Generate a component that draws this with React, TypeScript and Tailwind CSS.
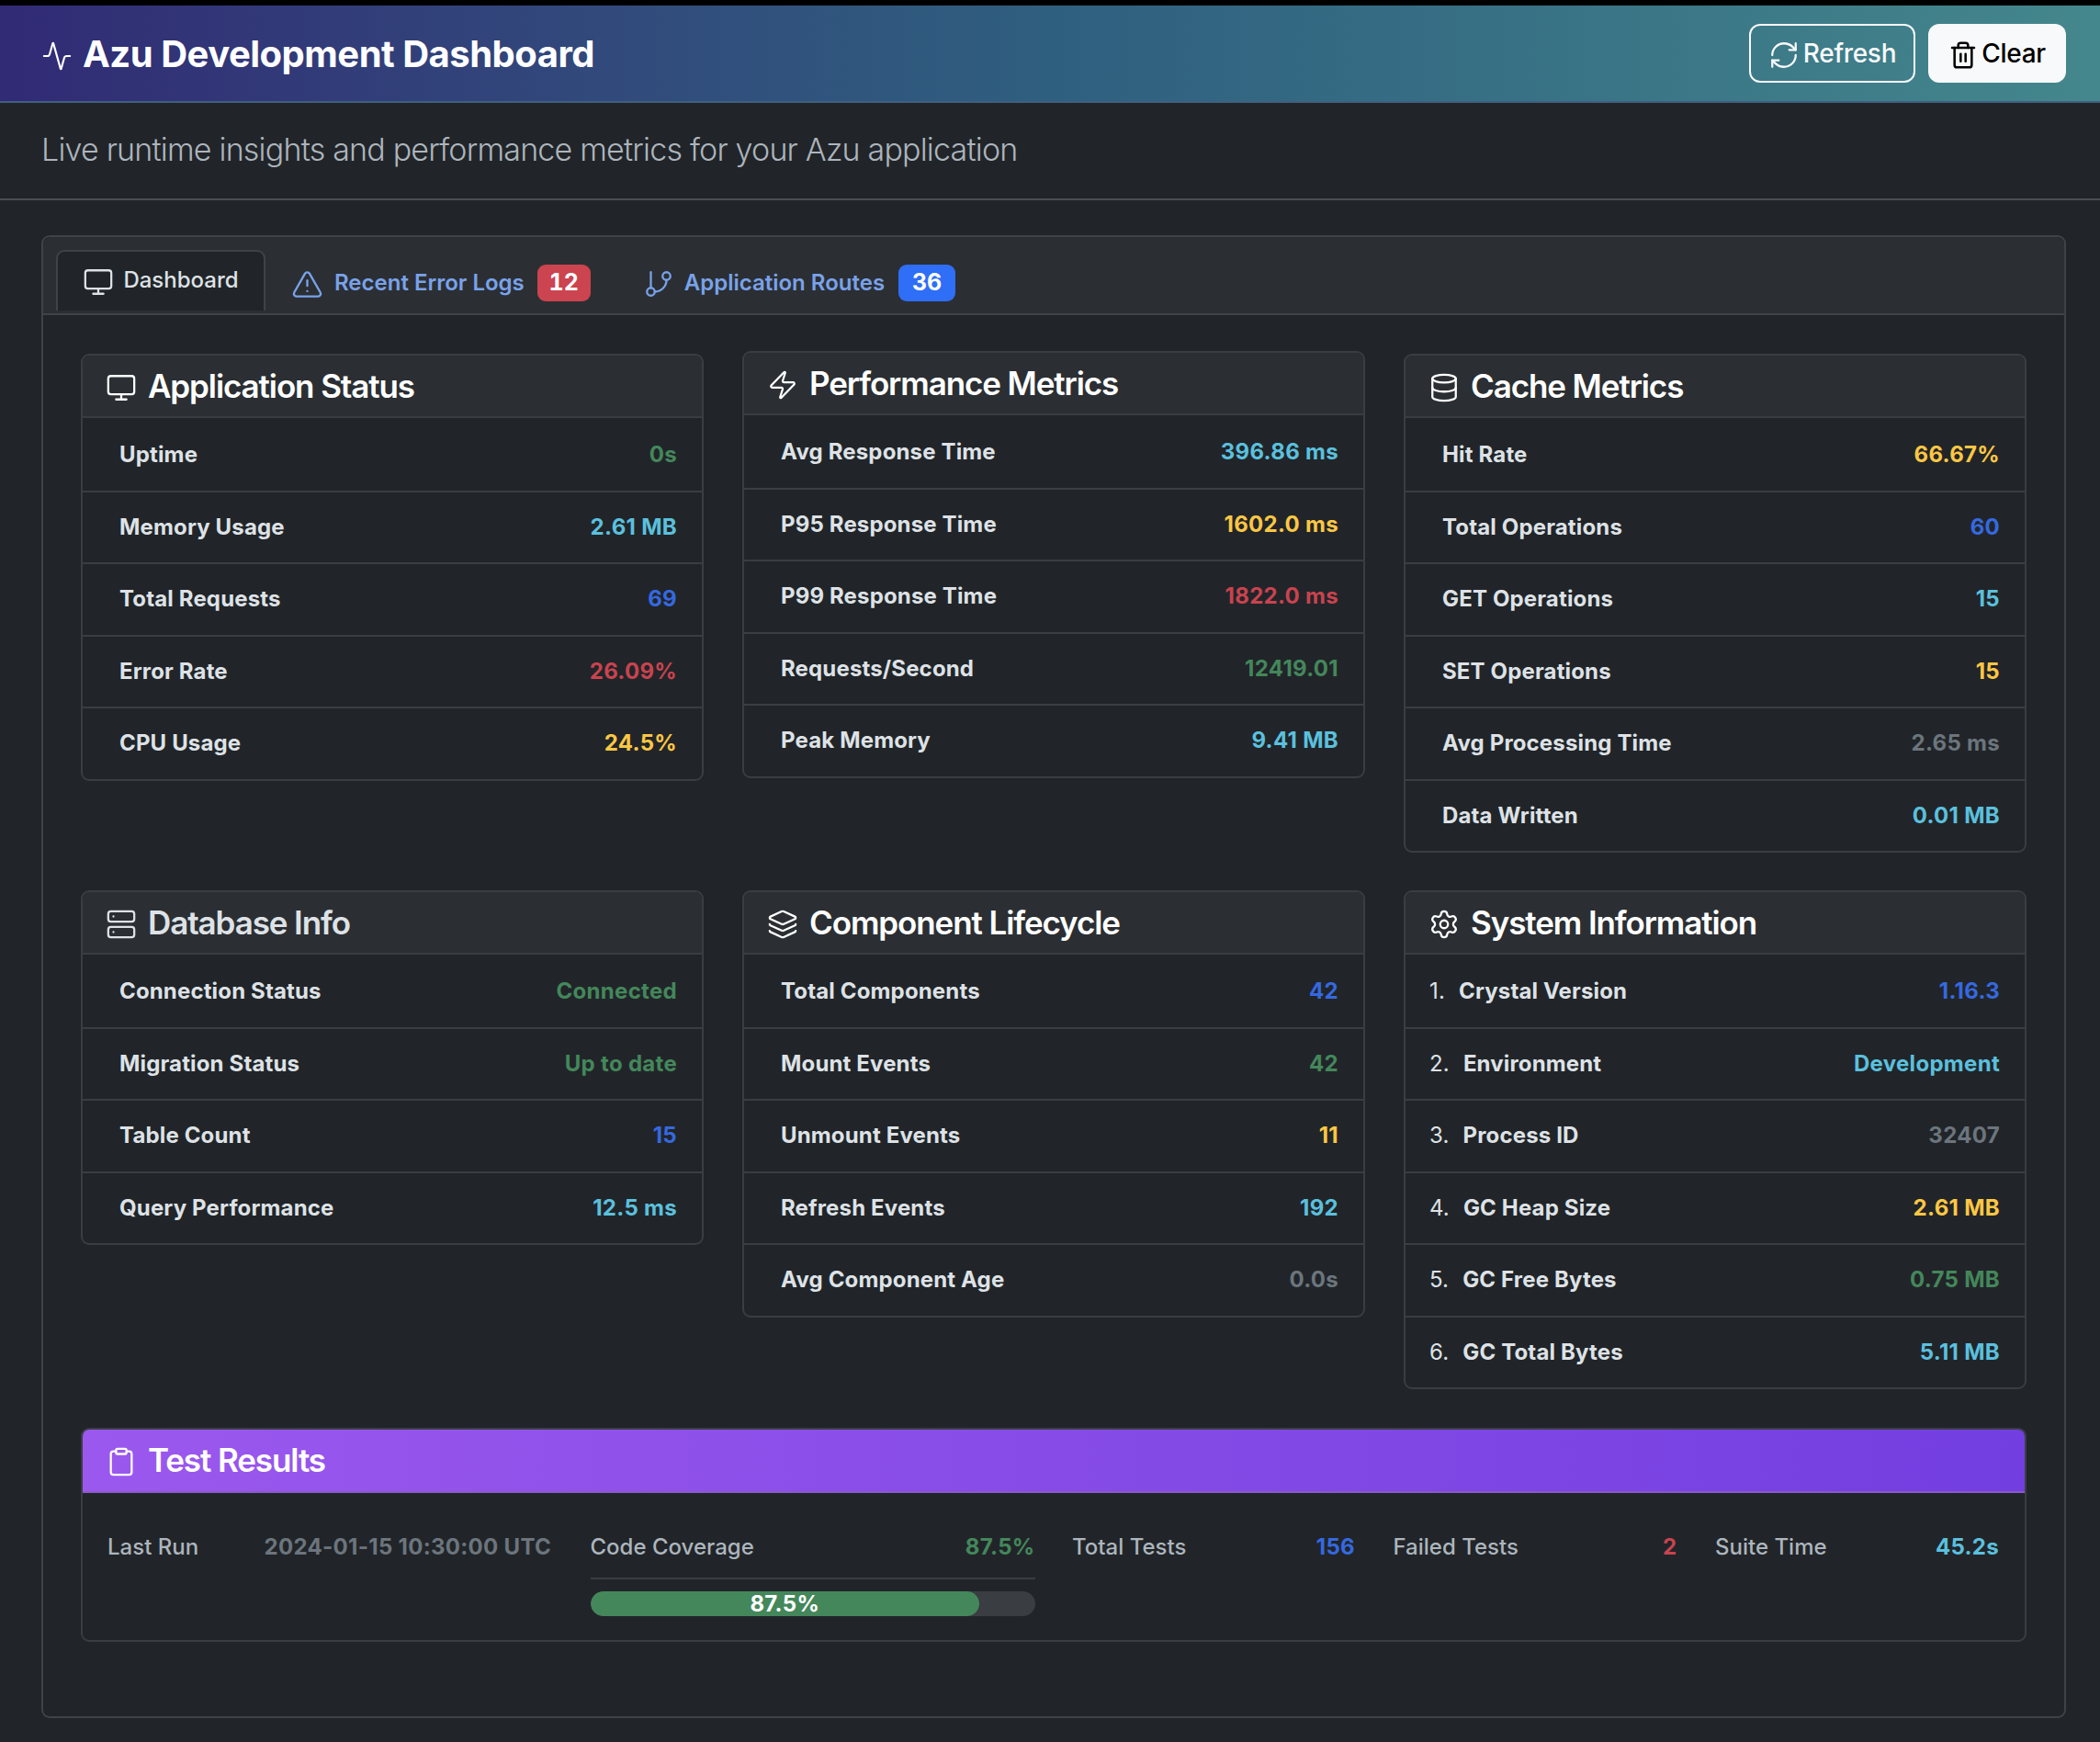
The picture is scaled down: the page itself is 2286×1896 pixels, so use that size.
import type { ComponentType } from "react"
import {
  Activity,
  Clipboard,
  Database,
  GitBranch,
  Layers,
  Monitor,
  RefreshCw,
  Server,
  Settings,
  Trash2,
  TriangleAlert,
  Zap,
} from "lucide-react"

const green = "text-[#44875b]"
const cyan = "text-[#5bc0de]"
const blue = "text-[#3569e0]"
const red = "text-[#c9434f]"
const yellow = "text-[#fdc744]"
const gray = "text-[#6c757d]"

type Row = { label: string; value: string; color: string; num?: number }

function Card({
  icon: Icon,
  title,
  rows,
  muted,
  className = "",
}: {
  icon: ComponentType<{ className?: string; strokeWidth?: number }>
  title: string
  rows: Row[]
  muted?: boolean
  className?: string
}) {
  return (
    <div className={`border-2 border-[#3a3e43] rounded-[9px] overflow-hidden ${className}`}>
      <div className="h-[68px] bg-[#2b2f33] border-b-2 border-[#3a3e43] px-[25px] flex items-center gap-[12px]">
        <Icon strokeWidth={1.6} className={`w-[34px] h-[34px] mt-[3px] ${muted ? "text-[#dee2e6]" : "text-white"}`} />
        <h3 className={`text-[35px] font-semibold tracking-[-1.1px] ${muted ? "text-[#dee2e6]" : "text-white"}`}>{title}</h3>
      </div>
      {rows.map((r, i) => (
        <div
          key={r.label}
          className={`h-[78.5px] flex items-center justify-between pr-[27px] ${r.num ? "pl-[26px]" : "pl-[40px]"} ${
            i > 0 ? "border-t-2 border-[#3a3e43]" : "pt-[2px]"
          }`}
        >
          <span className="text-[#dee2e6] text-[24px] font-bold tracking-[0.15px]">
            {r.num ? <span className="font-normal mr-[15px]">{r.num}.</span> : null}
            {r.label}
          </span>
          <span className={`text-[24px] font-bold tracking-[0.3px] ${r.color}`}>{r.value}</span>
        </div>
      ))}
    </div>
  )
}

function Stat({ label, value, color }: { label: string; value: string; color: string }) {
  return (
    <div className="flex items-center justify-between self-start">
      <span className="text-[24px] text-[#adb5bd] font-medium">{label}</span>
      <span className={`text-[24px] font-bold tracking-[0.3px] ${color}`}>{value}</span>
    </div>
  )
}

export default function App() {
  return (
    <div className="min-h-[1896px] bg-[#212529] font-['Inter',sans-serif] pt-[6px] relative">
      <div className="absolute top-0 left-0 right-0 h-[6px] bg-black" />
      <header className="h-[106px] flex items-center justify-between pl-[45px] pr-[37px] bg-gradient-to-r from-[#312a75] via-[#2f5f7f] to-[#44878c] border-b-2 border-[#3f5f80]">
        <div className="flex items-center gap-[11px]">
          <Activity strokeWidth={1.5} className="w-[34px] h-[34px] text-white mt-[6px]" />
          <h1 className="text-[40px] font-bold text-white tracking-[-0.5px] mt-[2px]">Azu Development Dashboard</h1>
        </div>
        <div className="flex items-center gap-[14px]">
          <button className="h-[64px] w-[181px] border-2 border-[#f8f9fa] rounded-[12px] flex items-center justify-center gap-[4px] text-[#f8f9fa] text-[28px] font-medium tracking-[-0.3px]">
            <RefreshCw strokeWidth={1.6} className="w-[34px] h-[34px] mt-[3px]" />
            Refresh
          </button>
          <button className="h-[64px] w-[150px] bg-[#f8f9fa] rounded-[12px] flex items-center justify-center gap-[4px] text-black text-[28px] font-medium tracking-[-0.3px]">
            <Trash2 strokeWidth={1.9} className="w-[32px] h-[32px] mt-[3px]" />
            Clear
          </button>
        </div>
      </header>

      <div className="h-[106px] border-b-2 border-[#4a4e53] flex items-center pl-[45px] pb-[3px]">
        <p className="text-[34px] font-light text-[#adb5bd] tracking-[-0.8px]">Live runtime insights and performance metrics for your Azu application</p>
      </div>

      <main className="ml-[45px] mr-[37px] mt-[38px] h-[1614px] border-2 border-[#3f4348] rounded-[9px]">
        <div className="h-[85px] bg-[#2b2f33] border-b-2 border-[#3f4348] pl-[14px] pt-[14px] flex items-start rounded-t-[9px]">
          <div className="w-[228px] h-[66px] bg-[#212529] border-2 border-b-0 border-[#3f4348] rounded-t-[9px] flex items-center justify-center gap-[10px] text-[#dee2e6] text-[24px] font-medium pb-[2px]">
            <Monitor strokeWidth={1.6} className="w-[34px] h-[34px] mt-[3px]" />
            Dashboard
          </div>
          <div className="flex items-center gap-[12px] ml-[28px] h-[72px] text-[#7aa2ea] text-[24px] font-semibold">
            <TriangleAlert strokeWidth={1.6} className="w-[35px] h-[35px] mt-[2px]" />
            Recent Error Logs
            <span className="w-[58px] h-[40px] ml-[2px] rounded-[9px] bg-[#cb444f] text-white text-[25px] font-bold flex items-center justify-center tabular-nums">12</span>
          </div>
          <div className="flex items-center gap-[11px] ml-[57px] h-[72px] text-[#7aa2ea] text-[24px] font-semibold">
            <GitBranch strokeWidth={1.6} className="w-[34px] h-[34px] mt-[2px]" />
            Application Routes
            <span className="w-[62px] h-[40px] ml-[4px] rounded-[9px] bg-[#2f6ef6] text-white text-[25px] font-bold flex items-center justify-center tabular-nums">36</span>
          </div>
        </div>

        <div className="px-[41px] pt-[39px]">
          <div className="grid grid-cols-3 gap-x-[42px] items-start">
            <Card
              icon={Monitor}
              title="Application Status"
              className="mt-[3px]"
              rows={[
                { label: "Uptime", value: "0s", color: green },
                { label: "Memory Usage", value: "2.61 MB", color: cyan },
                { label: "Total Requests", value: "69", color: blue },
                { label: "Error Rate", value: "26.09%", color: red },
                { label: "CPU Usage", value: "24.5%", color: yellow },
              ]}
            />
            <Card
              icon={Zap}
              title="Performance Metrics"
              rows={[
                { label: "Avg Response Time", value: "396.86 ms", color: cyan },
                { label: "P95 Response Time", value: "1602.0 ms", color: yellow },
                { label: "P99 Response Time", value: "1822.0 ms", color: red },
                { label: "Requests/Second", value: "12419.01", color: green },
                { label: "Peak Memory", value: "9.41 MB", color: cyan },
              ]}
            />
            <Card
              icon={Database}
              title="Cache Metrics"
              className="mt-[3px]"
              rows={[
                { label: "Hit Rate", value: "66.67%", color: yellow },
                { label: "Total Operations", value: "60", color: blue },
                { label: "GET Operations", value: "15", color: cyan },
                { label: "SET Operations", value: "15", color: yellow },
                { label: "Avg Processing Time", value: "2.65 ms", color: gray },
                { label: "Data Written", value: "0.01 MB", color: cyan },
              ]}
            />
          </div>

          <div className="grid grid-cols-3 gap-x-[42px] items-start mt-[41px]">
            <Card
              icon={Server}
              title="Database Info"
              muted
              rows={[
                { label: "Connection Status", value: "Connected", color: green },
                { label: "Migration Status", value: "Up to date", color: green },
                { label: "Table Count", value: "15", color: blue },
                { label: "Query Performance", value: "12.5 ms", color: cyan },
              ]}
            />
            <Card
              icon={Layers}
              title="Component Lifecycle"
              rows={[
                { label: "Total Components", value: "42", color: blue },
                { label: "Mount Events", value: "42", color: green },
                { label: "Unmount Events", value: "11", color: yellow },
                { label: "Refresh Events", value: "192", color: cyan },
                { label: "Avg Component Age", value: "0.0s", color: gray },
              ]}
            />
            <Card
              icon={Settings}
              title="System Information"
              rows={[
                { num: 1, label: "Crystal Version", value: "1.16.3", color: blue },
                { num: 2, label: "Environment", value: "Development", color: cyan },
                { num: 3, label: "Process ID", value: "32407", color: gray },
                { num: 4, label: "GC Heap Size", value: "2.61 MB", color: yellow },
                { num: 5, label: "GC Free Bytes", value: "0.75 MB", color: green },
                { num: 6, label: "GC Total Bytes", value: "5.11 MB", color: cyan },
              ]}
            />
          </div>

          <div className="mt-[42px] border-2 border-[#3a3e43] rounded-[9px] overflow-hidden h-[233px]">
            <div className="h-[69px] bg-gradient-to-r from-[#9b58ee] to-[#733ee0] border-b-2 border-[#8a5ac8] px-[25px] flex items-center gap-[12px]">
              <Clipboard strokeWidth={1.6} className="w-[34px] h-[34px] mt-[3px] text-white" />
              <h3 className="text-[35px] font-semibold text-white tracking-[-1.1px]">Test Results</h3>
            </div>
            <div className="grid grid-cols-[483px_484px_308px_309px_309px] gap-x-[41.5px] pl-[27px] pt-[41px]">
              <Stat label="Last Run" value="2024-01-15 10:30:00 UTC" color={gray} />
              <div className="ml-[1px] -mr-[1px]">
                <Stat label="Code Coverage" value="87.5%" color={green} />
                <div className="mt-[15px] border-t-2 border-[#3a3e43] pt-[13px]">
                  <div className="h-[27px] rounded-full bg-[#3a3d41] overflow-hidden">
                    <div className="h-full w-[87.5%] rounded-full bg-[#44875b] flex items-center justify-center text-white text-[24px] font-bold tracking-[0.3px]">
                      87.5%
                    </div>
                  </div>
                </div>
              </div>
              <Stat label="Total Tests" value="156" color={blue} />
              <Stat label="Failed Tests" value="2" color={red} />
              <Stat label="Suite Time" value="45.2s" color={cyan} />
            </div>
          </div>
        </div>
      </main>
    </div>
  )
}
